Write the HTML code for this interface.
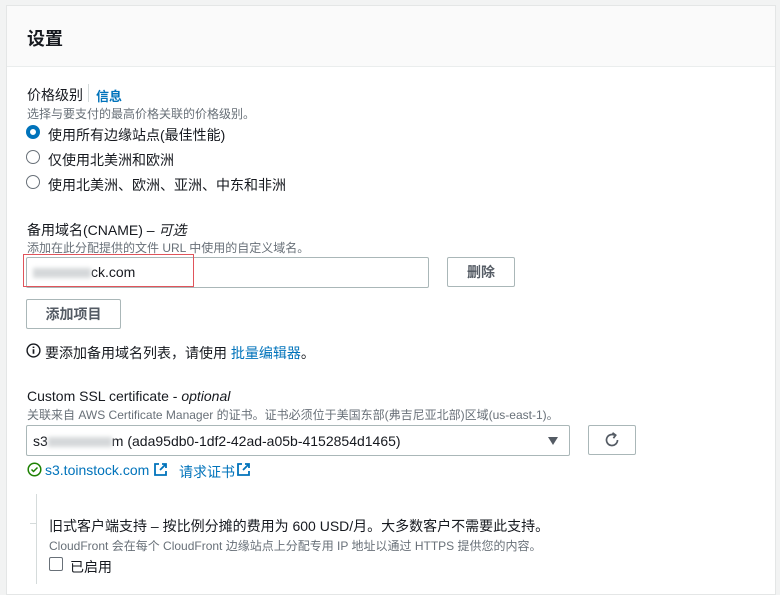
<!DOCTYPE html>
<html><head><meta charset="utf-8"><style>
*{margin:0;padding:0;box-sizing:border-box}
body{width:780px;height:580px;background:#f2f3f3;font-family:"Liberation Sans","Noto Sans CJK SC",sans-serif;color:#16191f;position:relative;overflow:hidden;font-size:14px}
.card{position:absolute;left:6px;top:5px;width:770px;height:590px;background:#fff;border:1px solid #e4e6e6}
.hdr{position:absolute;left:0;top:0;width:100%;height:61px;background:#fafafa;border-bottom:1px solid #eaeded}
.a{position:absolute;white-space:nowrap}
.s{font-size:12px;color:#687078}
.lk{color:#0073bb}
.radio{position:absolute;width:14px;height:14px;border:1.5px solid #687078;border-radius:50%}
.radio.on{border:4px solid #0073bb}
.btn{position:absolute;border:1px solid #aab7b8;border-radius:2px;background:#fff;font-weight:bold;color:#545b64;text-align:center}
.inp{position:absolute;border:1px solid #aab7b8;border-radius:2px;background:#fff}
.blur{display:inline-block;background:#d5d8da;filter:blur(2px);height:10px;vertical-align:middle}
</style></head><body>
<div class="card"><div class="hdr"></div></div>
<div class="a" style="left:27px;top:25px;font-size:18px;font-weight:bold">设置</div>

<div class="a" style="left:27px;top:85px">价格级别</div>
<div class="a" style="left:88px;top:84px;width:1px;height:18px;background:#d5dbdb"></div>
<div class="a lk" style="left:96px;top:86px;font-size:13px;font-weight:bold">信息</div>
<div class="a s" style="left:27px;top:105px">选择与要支付的最高价格关联的价格级别。</div>
<div class="radio on" style="left:26px;top:125px"></div>
<div class="a" style="left:48px;top:125px">使用所有边缘站点(最佳性能)</div>
<div class="radio" style="left:26px;top:150px"></div>
<div class="a" style="left:48px;top:150px">仅使用北美洲和欧洲</div>
<div class="radio" style="left:26px;top:175px"></div>
<div class="a" style="left:48px;top:175px">使用北美洲、欧洲、亚洲、中东和非洲</div>

<div class="a" style="left:27px;top:220px">备用域名(CNAME) – <i>可选</i></div>
<div class="a s" style="left:27px;top:239px">添加在此分配提供的文件 URL 中使用的自定义域名。</div>
<div class="inp" style="left:26px;top:257px;width:403px;height:31px"></div>
<div class="a" style="left:23px;top:254px;width:171px;height:33px;border:1px solid #e0545b"></div>
<div class="a" style="left:33px;top:264px"><span class="blur" style="width:58px"></span>ck.com</div>
<div class="btn" style="left:447px;top:257px;width:68px;height:30px;line-height:28px">删除</div>
<div class="btn" style="left:26px;top:299px;width:95px;height:30px;line-height:28px">添加项目</div>
<svg class="a" style="left:26px;top:343px" width="15" height="15" viewBox="0 0 15 15"><circle cx="7.5" cy="7.5" r="6.4" fill="none" stroke="#16191f" stroke-width="1.4"/><path d="M7.5 6.3v4.5M7.5 3.6v1.4" stroke="#16191f" stroke-width="1.7"/></svg>
<div class="a" style="left:45px;top:343px">要添加备用域名列表，请使用 <span class="lk">批量编辑器</span>。</div>

<div class="a" style="left:27px;top:388px">Custom SSL certificate - <i>optional</i></div>
<div class="a s" style="left:27px;top:406px">关联来自 AWS Certificate Manager 的证书。证书必须位于美国东部(弗吉尼亚北部)区域(us-east-1)。</div>
<div class="inp" style="left:26px;top:425px;width:544px;height:31px"></div>
<div class="a" style="left:33px;top:433px">s3<span class="blur" style="width:64px"></span>m (ada95db0-1df2-42ad-a05b-4152854d1465)</div>
<div class="a" style="left:548px;top:437px;width:0;height:0;border-left:5px solid transparent;border-right:5px solid transparent;border-top:8px solid #545b64"></div>
<div class="btn" style="left:588px;top:425px;width:48px;height:30px"></div>
<svg class="a" style="left:603px;top:431px" width="18" height="18" viewBox="0 0 18 18"><path d="M14.5 9A5.5 5.5 0 1 1 11.5 4.1" fill="none" stroke="#545b64" stroke-width="1.7"/><path d="M9.5 1.8L12.7 4.2L10.4 7.2" fill="none" stroke="#545b64" stroke-width="1.7"/></svg>
<svg class="a" style="left:27px;top:462px" width="15" height="15" viewBox="0 0 15 15"><circle cx="7.5" cy="7.5" r="6.3" fill="none" stroke="#1d8102" stroke-width="1.5"/><path d="M4.5 7.5l2 2 4-4" fill="none" stroke="#1d8102" stroke-width="1.5"/></svg>
<div class="a lk" style="left:45px;top:462px">s3.toinstock.com</div>
<svg class="a" style="left:153px;top:462px" width="15" height="15" viewBox="0 0 15 15"><path d="M6 2H2v11h11V9M9 2h4v4M13 2L7 8" fill="none" stroke="#0073bb" stroke-width="1.8"/></svg>
<div class="a lk" style="left:179px;top:462px">请求证书</div>
<svg class="a" style="left:236px;top:462px" width="15" height="15" viewBox="0 0 15 15"><path d="M6 2H2v11h11V9M9 2h4v4M13 2L7 8" fill="none" stroke="#0073bb" stroke-width="1.8"/></svg>

<div class="a" style="left:36px;top:494px;width:1px;height:90px;background:#d5dbdb"></div>
<div class="a" style="left:30px;top:523px;width:6px;height:1px;background:#d5dbdb"></div>
<div class="a" style="left:49px;top:516px">旧式客户端支持 – 按比例分摊的费用为 600 USD/月。大多数客户不需要此支持。</div>
<div class="a s" style="left:49px;top:537px">CloudFront 会在每个 CloudFront 边缘站点上分配专用 IP 地址以通过 HTTPS 提供您的内容。</div>
<div class="a" style="left:49px;top:557px;width:14px;height:14px;border:1.5px solid #687078;border-radius:2px"></div>
<div class="a" style="left:70px;top:557px">已启用</div>
</body></html>
